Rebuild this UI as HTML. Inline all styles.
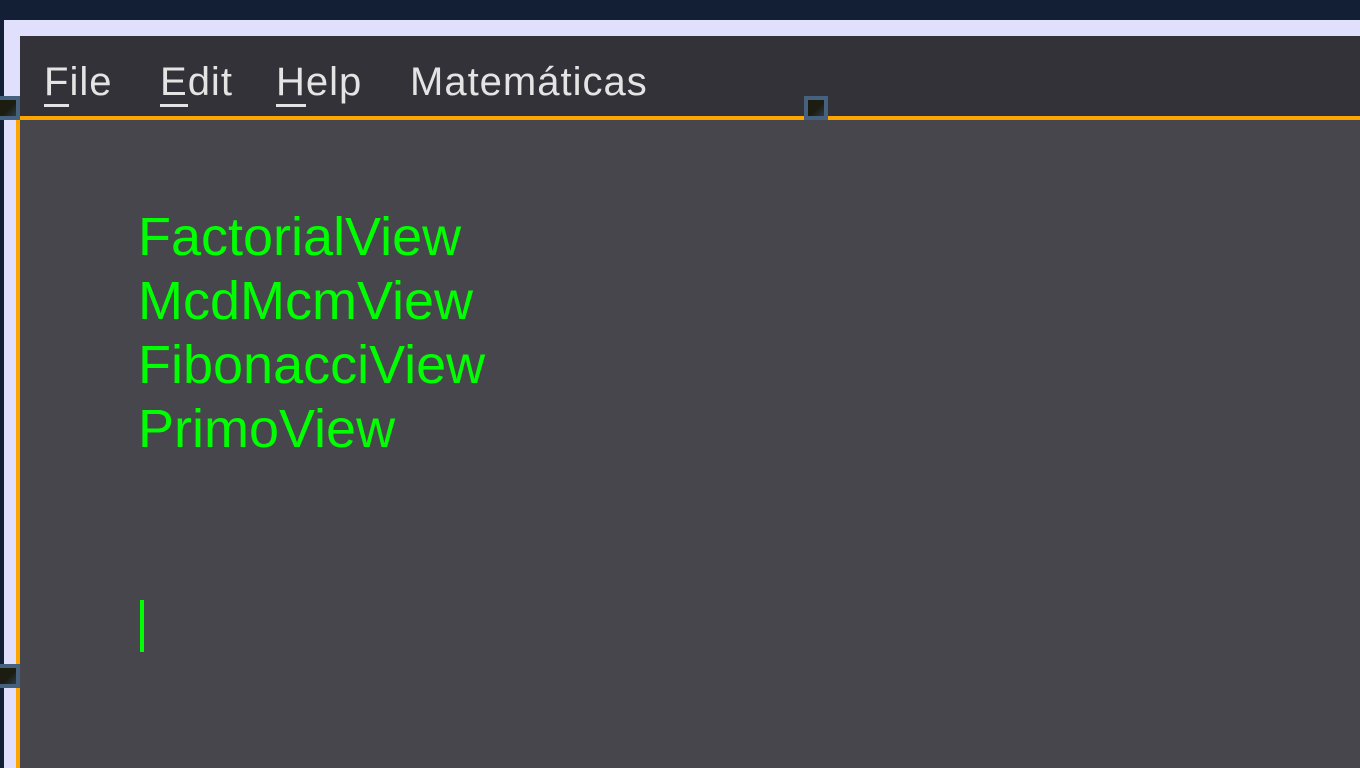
<!DOCTYPE html>
<html><head><meta charset="utf-8"><style>
*{margin:0;padding:0;box-sizing:border-box}
body{width:1360px;height:768px;overflow:hidden;background:#131f35;position:relative;font-family:"Liberation Sans",Arial,sans-serif}
.abs{position:absolute}
.menu{color:#e4e4e4;font-size:40px;top:58px;line-height:48px;letter-spacing:1px}
.menu u{text-decoration:none;border-bottom:3px solid #e4e4e4}
.t{left:138px;color:#00ff00;font-size:54px;line-height:64px}
.h{width:24px;height:24px;background:#46617d;}
.h::after{content:"";position:absolute;left:4px;top:4px;width:16px;height:16px;background:linear-gradient(135deg,#1c1c10 55%,#2c3a45 100%)}
</style></head><body>
<div class="abs" style="left:4px;top:20px;width:1356px;height:748px;background:#e0e0fc"></div>
<div class="abs" style="left:20px;top:36px;width:1340px;height:80px;background:#333238"></div>
<div class="abs" style="left:16px;top:116px;width:1344px;height:4px;background:#ffa500"></div>
<div class="abs" style="left:16px;top:116px;width:4px;height:652px;background:#ffa500"></div>
<div class="abs" style="left:20px;top:120px;width:1340px;height:648px;background:#47464c"></div>
<div class="abs menu" style="left:44px"><u>F</u>ile</div>
<div class="abs menu" style="left:160px"><u>E</u>dit</div>
<div class="abs menu" style="left:276px"><u>H</u>elp</div>
<div class="abs menu" style="left:410px">Matemáticas</div>
<div class="abs t" style="top:205px">FactorialView</div>
<div class="abs t" style="top:269px">McdMcmView</div>
<div class="abs t" style="top:333px">FibonacciView</div>
<div class="abs t" style="top:397px">PrimoView</div>
<div class="abs" style="left:140px;top:600px;width:4px;height:52px;background:#00ff00"></div>
<div class="abs h" style="left:804px;top:96px"></div>
<div class="abs h" style="left:-4px;top:96px"></div>
<div class="abs h" style="left:-4px;top:664px"></div>
</body></html>
